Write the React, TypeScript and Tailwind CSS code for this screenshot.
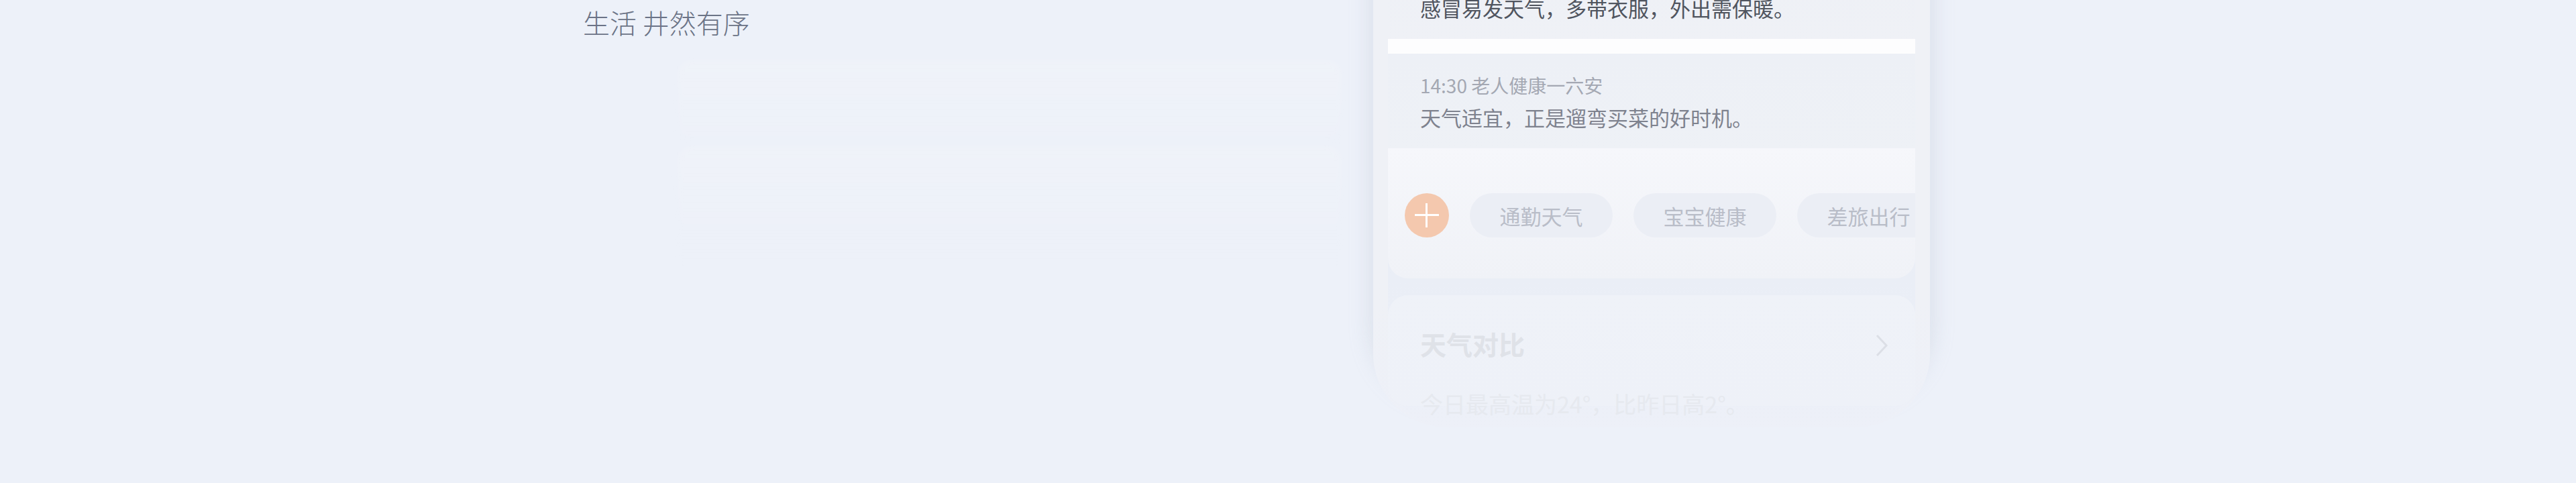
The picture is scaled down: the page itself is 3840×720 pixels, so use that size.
const chips = ["通勤天气", "宝宝健康", "差旅出行"]

function Chip({ label }: { label: string }) {
  return (
    <div className="flex h-[66px] w-[213px] shrink-0 items-center justify-center rounded-full bg-[#ebeef5] text-[31px] leading-[31px] text-[#b9bdc8]">
      {label}
    </div>
  )
}

function PlusButton() {
  return (
    <div className="relative h-[66px] w-[66px] shrink-0 rounded-full bg-[#f4c8ae]">
      <div className="absolute left-[15px] top-[31px] h-[3px] w-[36px] bg-white" />
      <div className="absolute left-[31px] top-[15px] h-[36px] w-[3px] bg-white" />
    </div>
  )
}

function Phone() {
  return (
    <div className="-mt-[100px] h-[737px] w-[830px] shrink-0 rounded-b-[110px] bg-gradient-to-b from-[#eff1f6] from-75% to-[#edf0f8] px-[22px] shadow-[0_-40px_32px_4px_rgba(170,178,196,0.28)]">
      <div className="flex h-full flex-col rounded-b-[90px] bg-gradient-to-b from-[#eaeef6] from-70% to-[#edf0f8]">
        <div className="h-[158px] bg-gradient-to-b from-[#edf0f6] to-[#eff1f6] pl-[48px] pt-[96px]">
          <p className="text-[31px] leading-[31px] text-[#50555f]">感冒易发天气，多带衣服，外出需保暖。</p>
        </div>
        <div className="h-[22px] bg-[#fdfdfe]" />
        <div className="h-[141px] bg-gradient-to-b from-[#edf0f6] to-[#eef1f6] pl-[48px] pt-[33px]">
          <p className="text-[28px] leading-[28px] text-[#a4a8b3]">14:30 老人健康一六安</p>
          <p className="mt-[18px] text-[31px] leading-[31px] text-[#7e828e]">天气适宜，正是遛弯买菜的好时机。</p>
        </div>
        <div className="flex h-[194px] items-start gap-[31px] overflow-hidden rounded-b-[30px] bg-gradient-to-b from-[#f6f7fb] to-[#f0f2f7] pl-[25px] pt-[67px]">
          <PlusButton />
          {chips.map((c) => (
            <Chip key={c} label={c} />
          ))}
        </div>
        <div className="mt-[25px] h-[165px] rounded-[30px] bg-gradient-to-b from-[#eff2f8] to-[#eef1f8] px-[48px] pt-[53px]">
          <div className="flex items-start justify-between">
            <p className="text-[39px] font-bold leading-[39px] text-[#dfe2e8]">天气对比</p>
            <svg width="20" height="34" viewBox="0 0 20 34" className="mr-[-8px] mt-[5px]">
              <path d="M3 2 L17 17 L3 32" fill="none" stroke="#dcdfe6" strokeWidth="3" />
            </svg>
          </div>
          <p className="mt-[53px] text-[34px] leading-[34px] text-[#e6e9ef]">今日最高温为24°，比昨日高2°。</p>
        </div>
      </div>
    </div>
  )
}

export default function App() {
  return (
    <div className="flex h-[720px] w-[3840px] overflow-hidden bg-[#edf1f9] font-['Noto_Sans_CJK_SC',sans-serif]">
      <div className="flex w-[2047px] shrink-0 flex-col pl-[869px] pt-[12px]">
        <h1 className="text-[40px] font-light leading-[42px] text-[#6b7386]">生活 井然有序</h1>
        <div className="ml-[141px] mt-[36px] flex w-[990px] flex-col gap-[8px] blur-[4px]">
          <div className="h-[120px] rounded-[20px] bg-gradient-to-b from-white/15 to-white/5" />
          <div className="h-[180px] rounded-[20px] bg-gradient-to-b from-white/15 to-white/0" />
        </div>
      </div>
      <Phone />
    </div>
  )
}
